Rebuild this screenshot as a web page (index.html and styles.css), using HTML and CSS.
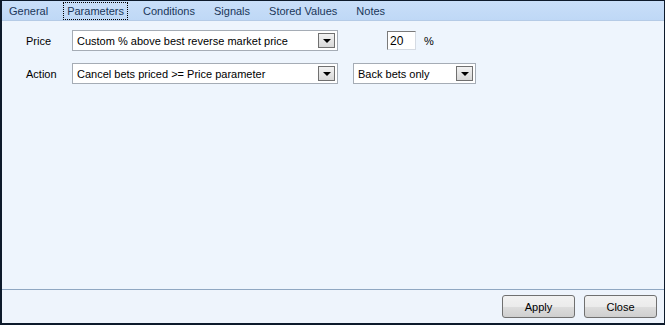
FILE: index.html
```html
<!DOCTYPE html>
<html lang="en">
<head>
    <meta charset="UTF-8">
    <title>Parameters</title>
    <link rel="stylesheet" href="styles.css">
</head>
<body>
    <div class="window">
        <div class="tabs">
            <span class="tab">General</span>
            <span class="tab active">Parameters</span>
            <span class="tab">Conditions</span>
            <span class="tab">Signals</span>
            <span class="tab">Stored Values</span>
            <span class="tab">Notes</span>
        </div>

        <div class="panel">
            <div class="row">
                <span class="label">Price</span>
                <div class="combo wide">
                    <span class="combo-text">Custom % above best reverse market price</span>
                    <span class="arrow"></span>
                </div>
                <div class="textbox">20</div>
                <span class="unit">%</span>
            </div>
            <div class="row">
                <span class="label">Action</span>
                <div class="combo wide">
                    <span class="combo-text">Cancel bets priced &gt;= Price parameter</span>
                    <span class="arrow"></span>
                </div>
                <div class="combo narrow">
                    <span class="combo-text">Back bets only</span>
                    <span class="arrow"></span>
                </div>
            </div>
        </div>

        <div class="footer">
            <button class="btn">Apply</button>
            <button class="btn">Close</button>
        </div>
    </div>
</body>
</html>
```

FILE: styles.css
```css
* {
    margin: 0;
    padding: 0;
    box-sizing: border-box;
}

body {
    font-family: "Liberation Sans", Arial, sans-serif;
    font-size: 11px;
    color: #000;
    background: #fff;
}

.window {
    width: 665px;
    height: 325px;
    border: 1px solid #0d1a2b;
    border-left-width: 2px;
    border-bottom-width: 2px;
    display: flex;
    flex-direction: column;
    background: #eef5fd;
}

.tabs {
    height: 20px;
    display: flex;
    align-items: center;
    padding-left: 3px;
    gap: 11px;
    background: linear-gradient(#c9dff9, #bfd8f6);
    border-bottom: 1px solid #b5cbe6;
}

.tab {
    padding: 2px 3px;
    color: #1a3659;
    border: 1px dotted transparent;
}

.tab.active {
    border-color: #000;
}

.panel {
    flex: 1;
    padding: 9px 0 0 22px;
    display: flex;
    flex-direction: column;
    gap: 12px;
    border-bottom: 1px solid #8fa7c2;
}

.row {
    display: flex;
    align-items: center;
    height: 21px;
}

.label {
    width: 48px;
    padding-left: 2px;
}

.combo {
    height: 21px;
    background: #fff;
    border: 1px solid #a5acb5;
    display: flex;
    align-items: center;
    justify-content: space-between;
    padding: 0 2px 0 4px;
}

.combo.wide {
    width: 266px;
}

.combo.narrow {
    width: 123px;
    margin-left: 15px;
}

.arrow {
    width: 17px;
    height: 15px;
    border: 1px solid #707070;
    background: linear-gradient(#f2f2f2, #d8d8d8);
    position: relative;
}

.arrow::after {
    content: "";
    position: absolute;
    left: 4px;
    top: 5px;
    border-left: 4px solid transparent;
    border-right: 4px solid transparent;
    border-top: 4px solid #000;
}

.textbox {
    width: 29px;
    height: 19px;
    margin-left: 49px;
    background: #fff;
    border: 1px solid #d5dbe3;
    border-top-color: #7a7a7a;
    border-left-color: #7a7a7a;
    padding: 2px 0 0 2px;
    font-size: 12px;
}

.unit {
    margin-left: 8px;
}

.footer {
    height: 33px;
    display: flex;
    justify-content: flex-end;
    align-items: center;
    gap: 9px;
    padding-right: 7px;
    background: #eef4fc;
}

.btn {
    width: 73px;
    height: 23px;
    font-family: inherit;
    font-size: 11px;
    border: 1px solid #707070;
    border-radius: 3px;
    background: linear-gradient(#f2f2f2 0%, #ebebeb 50%, #dddddd 51%, #cfcfcf 100%);
    color: #000;
}
```
